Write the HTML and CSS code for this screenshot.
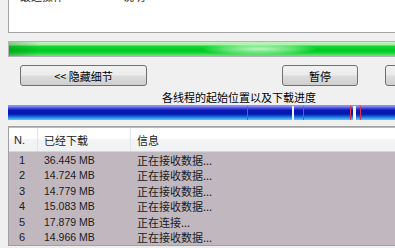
FILE: index.html
```html
<!DOCTYPE html>
<html lang="zh-CN">
<head>
    <meta charset="UTF-8">
    <title>下载详情</title>
    <link rel="stylesheet" href="styles.css">
</head>
<body>
<div class="window">
    <!-- Recent operations box (cut off at top) -->
    <div class="recent">
        <span class="recent-col1">最近操作</span>
        <span class="recent-col2">说明</span>
    </div>

    <!-- Total progress -->
    <div class="total-bar"><div class="total-shine"></div></div>

    <!-- Buttons -->
    <div class="button-row">
        <button class="btn btn-details">&lt;&lt; 隐藏细节</button>
        <button class="btn btn-pause">暂停</button>
        <button class="btn btn-cancel"></button>
    </div>

    <div class="threads-label">各线程的起始位置以及下载进度</div>

    <div class="threads-bar">
        <span class="mark red" style="left: 239px"></span>
        <span class="mark white" style="left: 284px"></span>
        <span class="mark red" style="left: 295px"></span>
        <span class="mark red" style="left: 342px"></span>
        <span class="mark white" style="left: 345px; width: 3px"></span>
        <span class="mark red" style="left: 352px"></span>
    </div>

    <!-- Thread list -->
    <div class="list">
        <div class="list-head">
            <div class="col-n">N.</div>
            <div class="col-size">已经下载</div>
            <div class="col-info">信息</div>
        </div>
        <div class="list-row"><div class="col-n">1</div><div class="col-size">36.445 MB</div><div class="col-info">正在接收数据...</div></div>
        <div class="list-row"><div class="col-n">2</div><div class="col-size">14.724 MB</div><div class="col-info">正在接收数据...</div></div>
        <div class="list-row"><div class="col-n">3</div><div class="col-size">14.779 MB</div><div class="col-info">正在接收数据...</div></div>
        <div class="list-row"><div class="col-n">4</div><div class="col-size">15.083 MB</div><div class="col-info">正在接收数据...</div></div>
        <div class="list-row"><div class="col-n">5</div><div class="col-size">17.879 MB</div><div class="col-info">正在连接...</div></div>
        <div class="list-row"><div class="col-n">6</div><div class="col-size">14.966 MB</div><div class="col-info">正在接收数据...</div></div>
    </div>
</div>
</body>
</html>
```

FILE: styles.css
```css
body {
    margin: 0;
    background: #f0f0f0;
    font-family: "Liberation Sans", "Noto Sans CJK SC", sans-serif;
    font-size: 11px;
    color: #1a1a1a;
    overflow: hidden;
}
.window {
    width: 395px;
    height: 248px;
    overflow: hidden;
}

/* 最近操作 */
.recent {
    margin-left: 8px;
    width: 400px;
    height: 32px;
    background: #fff;
    border-left: 1px solid #a3a3a3;
    border-bottom: 1px solid #a3a3a3;
    display: flex;
    align-items: flex-start;
}
.recent span {
    font-family: "Noto Sans CJK SC", sans-serif;
    line-height: 13px;
    margin-top: -10px;
}
.recent-col1 {
    margin-left: 11px;
    width: 103px;
}

/* 总进度 */
.total-bar {
    position: relative;
    margin: 8px 0 0 8px;
    width: 400px;
    height: 14px;
    border: 1px solid #b4b4b4;
    background: linear-gradient(#c4f2c4 0%, #a8eea8 18%, #14d634 32%, #00cc22 55%, #08cf2a 72%, #6fe27f 100%);
}
.total-bar::before {
    content: "";
    position: absolute;
    left: 0;
    top: 0;
    width: 30px;
    height: 100%;
    background: linear-gradient(90deg, rgba(0, 80, 0, 0.25), rgba(0, 80, 0, 0));
}
.total-shine {
    position: absolute;
    left: 195px;
    top: 1px;
    width: 110px;
    height: 12px;
    background: radial-gradient(ellipse at center, rgba(220, 255, 220, 0.85) 0%, rgba(200, 250, 200, 0.45) 45%, rgba(200, 250, 200, 0) 75%);
}

/* 按钮 */
.button-row {
    display: flex;
    margin-top: 8px;
    padding-left: 20px;
    width: 460px;
}
.btn {
    flex-shrink: 0;
    height: 21px;
    padding: 0;
    border: 1px solid #707070;
    border-radius: 3px;
    background: linear-gradient(#f2f2f2 0%, #ebebeb 48%, #dddddd 52%, #cfcfcf 100%);
    font-family: "Noto Sans CJK SC", sans-serif;
    font-size: 11px;
    color: #000;
    line-height: 18px;
}
.btn-details {
    width: 127px;
}
.btn-pause {
    width: 76px;
    margin-left: 135px;
}
.btn-cancel {
    width: 76px;
    margin-left: 27px;
}

.threads-label {
    font-family: "Noto Sans CJK SC", sans-serif;
    font-size: 11px;
    line-height: 14px;
    padding-left: 162px;
    margin-top: 4px;
    color: #000;
}

/* 线程进度条 */
.threads-bar {
    position: relative;
    margin: 1px 0 0 8px;
    width: 400px;
    height: 14px;
    border-top: 1px solid #9a9aa6;
    background: linear-gradient(#9296f2 0%, #4a52dc 14%, #0c18b8 30%, #0018b0 55%, #1448d0 70%, #2c9ae8 86%, #5acaf0 100%);
}
.mark {
    position: absolute;
    top: 0;
    width: 2px;
    height: 100%;
}
.mark.red {
    width: 1px;
    background: #e0304a;
}
.mark.white {
    background: #f4f4ff;
}

/* 列表 */
.list {
    margin: 6px 0 0 8px;
    width: 400px;
    height: 118px;
    border-top: 1px solid #a0a0a0;
    border-left: 1px solid #a0a0a0;
    border-bottom: 1px solid #a0a0a0;
    background: #c1b7bf;
}
.list-head {
    display: flex;
    height: 23px;
    margin-top: 1px;
    background: linear-gradient(#ffffff 0%, #ffffff 45%, #f3f4f6 50%, #f1f2f4 100%);
    border-bottom: 1px solid #d6d6d8;
    color: #222;
}
.list-head div {
    display: flex;
    align-items: center;
    border-right: 1px solid #e3e4e6;
    font-family: "Noto Sans CJK SC", sans-serif;
}
.list-row {
    display: flex;
    height: 15.5px;
    align-items: center;
    color: #202020;
}
.col-n,
.col-size,
.col-info {
    box-sizing: border-box;
    flex-shrink: 0;
}
.col-n {
    width: 29px;
    padding-left: 10px;
}
.list-head .col-n {
    padding-left: 5px;
    font-family: "Liberation Sans", sans-serif;
}
.col-size {
    width: 93px;
    padding-left: 6px;
    font-size: 10.5px;
}
.list-head .col-size {
    font-size: 11px;
}
.col-info {
    width: 300px;
    padding-left: 6px;
    font-family: "Noto Sans CJK SC", sans-serif;
}
```
